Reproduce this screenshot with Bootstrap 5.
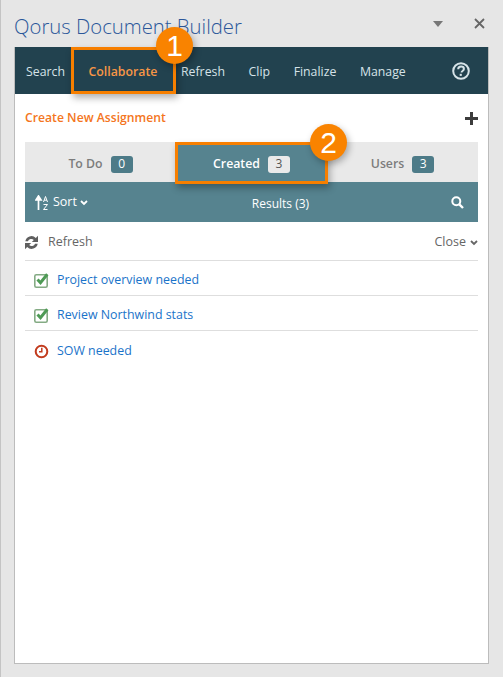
<!DOCTYPE html>
<html lang="en"><head><meta charset="utf-8"><title>Qorus Document Builder</title>
<link href="https://cdn.jsdelivr.net/npm/bootstrap@5.3.0/dist/css/bootstrap.min.css" rel="stylesheet">
<style>
html,body{height:100%;margin:0}
body{background:#e6e6e6;font-family:"Open Sans","Noto Sans",sans-serif;font-size:12.5px;overflow:hidden}
.shell{position:relative;width:503px;height:677px;border-left:1px solid #c4c4c4;padding:0 13px 13px 13px;display:flex;flex-direction:column}
.titlebar{height:47px;flex:none;display:flex;align-items:center}
.app-title{font-size:20.3px;font-weight:300;color:#2b579a;margin:0;line-height:1;padding:6px 0 0 0}
.caret-ic{margin-left:auto;margin-right:31px}
.close-ic{margin-right:5px}
.pane{flex:1;background:#fff;border:1px solid #bcbcbc;border-top:0;display:flex;flex-direction:column;width:475px}
.topnav{height:47px;flex:none;background:#22424f;display:flex;align-items:center}
.topnav a{color:#d6e3e8;text-decoration:none;padding:2px 11.8px 0;line-height:45px;font-size:12.3px}
.topnav a:first-child{padding-left:11px}
.topnav a.on{color:#f79646;font-weight:600}
.help-ic{margin-left:auto;margin-right:18px}
.inner{padding:0 10px;flex:1}
.newrow{height:48px;display:flex;align-items:center;justify-content:space-between}
.newlink{color:#f47521;font-weight:600;text-decoration:none;font-size:12.2px}
.tabset{display:flex;height:40px;background:#e9e9e9}
.tabset>div{flex:1;display:flex;align-items:center;justify-content:center;gap:8px;font-weight:600;color:#7c7c7c;font-size:12.3px;padding-top:4px}
.tabset>div.act{background:#56838f;color:#fff}
.pill{background:#4d7b88;color:#fff;font-weight:400;font-size:12px;line-height:16px;padding:0 7px;border-radius:3px;height:17px;min-width:22px;text-align:center}
.act .pill{background:#eaeaea;color:#555}
.sortbar{height:40px;background:#56838f;color:#fff;display:flex;align-items:center;padding:1px 14px 0 10px;position:relative}
.sortbar .mid{position:absolute;left:0;right:0;text-align:center;padding:2px 0 0 58px;font-size:12px}
.sortbar .left{display:flex;align-items:center;gap:3px}
.sortbar .sr{margin-left:auto;position:relative}
.tools{height:39px;display:flex;align-items:center;justify-content:space-between;color:#666;border-bottom:1px solid #dedede;padding-top:3px}
.tools .left{display:flex;align-items:center;gap:9px;margin-left:-1px}
.tasks .list-group-item{height:35px;padding:5px 0 0 9px;display:flex;align-items:center;gap:7px;border-left:0;border-right:0;border-top:0;border-bottom:1px solid #dedede;background:transparent}
.tasks a{color:#1a73c9;text-decoration:none;font-size:12.4px}
.mark-box{position:absolute;border:3px solid #f77f00;box-shadow:2px 4px 7px rgba(0,0,0,.3);pointer-events:none}
.mark-a{left:70px;top:47px;width:105px;height:47px}
.mark-b{left:174px;top:142px;width:153px;height:42px}
.num{position:absolute;border-radius:50%;background:#f98300;color:#fff;display:flex;align-items:center;justify-content:center;box-shadow:2px 3px 7px rgba(0,0,0,.3);font-family:"Liberation Sans",sans-serif;font-size:30px;line-height:1;width:37px;height:37px}
.num-a{left:155px;top:27px}
.num-b{left:309px;top:124px}
</style></head><body>
<div class="shell">
 <div class="titlebar">
  <h1 class="app-title">Qorus Document Builder</h1>
  <svg class="caret-ic" width="10" height="6" viewBox="0 0 10 6"><path d="M0 0h10L5 6z" fill="#777"/></svg>
  <svg class="close-ic" width="11" height="11" viewBox="0 0 11 11"><path d="M1 1l9 9M10 1l-9 9" stroke="#666" stroke-width="1.8"/></svg>
 </div>
 <div class="pane">
  <nav class="topnav">
   <a href="#">Search</a><a href="#" class="on">Collaborate</a><a href="#">Refresh</a><a href="#">Clip</a><a href="#">Finalize</a><a href="#">Manage</a>
   <svg class="help-ic" width="18" height="18" viewBox="0 0 18 18"><circle cx="9" cy="9" r="7.8" fill="none" stroke="#d6e3e8" stroke-width="2"/><path d="M6.200 7.200c0-1.700 1.300-2.600 2.900-2.600s2.800.9 2.800 2.300c0 1.100-.7 1.600-1.400 2.100-.6.400-.9.700-.9 1.400" fill="none" stroke="#d6e3e8" stroke-width="2"/><rect x="7.700" y="11.800" width="2.100" height="2.100" fill="#d6e3e8"/></svg>
  </nav>
  <div class="inner">
   <div class="newrow">
    <a href="#" class="newlink">Create New Assignment</a>
    <svg width="13" height="13" viewBox="0 0 13 13"><path d="M5 0h3v5h5v3H8v5H5V8H0V5h5z" fill="#3c3c3c"/></svg>
   </div>
   <div class="tabset">
    <div>To Do <span class="pill">0</span></div>
    <div class="act">Created <span class="pill">3</span></div>
    <div>Users <span class="pill">3</span></div>
   </div>
   <div class="sortbar">
    <span class="mid">Results (3)</span>
    <span class="left">
     <svg width="15" height="16" viewBox="0 0 15 16"><path d="M3.500 15V4M1 5l2.500-4L6 5z" stroke="#fff" stroke-width="1.700" fill="#fff"/><path d="M8.500 7l2-5.500 2 5.500M9.200 5.200h2.600M8.500 9.500h4l-4 5h4" fill="none" stroke="#fff" stroke-width="1"/></svg>
     <span>Sort</span>
     <svg width="8" height="6" viewBox="0 0 8 6"><path d="M1 1l3 3 3-3" fill="none" stroke="#fff" stroke-width="1.800"/></svg>
    </span>
    <svg class="sr" width="13" height="13" viewBox="0 0 13 13"><circle cx="5.300" cy="5.300" r="4" fill="none" stroke="#fff" stroke-width="2"/><path d="M8.300 8.300l3.700 3.700" stroke="#fff" stroke-width="2.400"/></svg>
   </div>
   <div class="tools">
    <span class="left">
     <svg width="15" height="15" viewBox="0 0 15 15"><path d="M1.300 6.300A6.200 6.200 0 0 1 11.800 3L14 .8V7H7.800l2-2A3.700 3.700 0 0 0 3.900 6.300zM13.700 8.700A6.200 6.200 0 0 1 3.200 12L1 14.200V8h6.200l-2 2a3.700 3.700 0 0 0 5.900-1.300z" fill="#5f5f5f"/></svg>
     <span>Refresh</span>
    </span>
    <span class="d-flex align-items-center gap-1">Close <svg width="8" height="6" viewBox="0 0 8 6"><path d="M1 1l3 3 3-3" fill="none" stroke="#666" stroke-width="1.800"/></svg></span>
   </div>
   <ul class="list-group list-group-flush tasks">
    <li class="list-group-item">
     <svg width="16" height="15" viewBox="0 0 16 15"><rect x=".8" y="1.800" width="12.400" height="12.400" rx="1.500" fill="none" stroke="#84ab84" stroke-width="1.600"/><path d="M3.500 6.500l3 3.200 6.800-8.500" fill="none" stroke="#4e9a55" stroke-width="3"/></svg>
     <a href="#">Project overview needed</a></li>
    <li class="list-group-item">
     <svg width="16" height="15" viewBox="0 0 16 15"><rect x=".8" y="1.800" width="12.400" height="12.400" rx="1.500" fill="none" stroke="#84ab84" stroke-width="1.600"/><path d="M3.500 6.500l3 3.200 6.800-8.500" fill="none" stroke="#4e9a55" stroke-width="3"/></svg>
     <a href="#">Review Northwind stats</a></li>
    <li class="list-group-item">
     <svg width="16" height="15" viewBox="0 0 16 15"><circle cx="7.500" cy="7.500" r="5.800" fill="none" stroke="#c23b1e" stroke-width="2"/><path d="M7.800 3.800v4H5" fill="none" stroke="#c23b1e" stroke-width="1.500"/></svg>
     <a href="#">SOW needed</a></li>
   </ul>
  </div>
 </div>
 <div class="mark-box mark-a"></div>
 <div class="mark-box mark-b"></div>
 <div class="num num-a">1</div>
 <div class="num num-b">2</div>
</div>
<script src="https://cdn.jsdelivr.net/npm/bootstrap@5.3.0/dist/js/bootstrap.bundle.min.js"></script>
</body></html>
